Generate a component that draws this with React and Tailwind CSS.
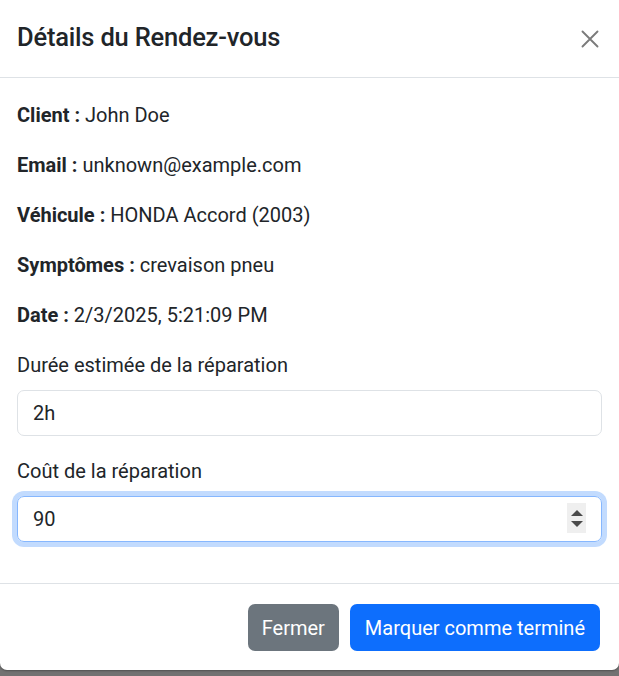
import React from 'react';

const rows = [
  ['Client', 'John Doe'],
  ['Email', 'unknown@example.com'],
  ['Véhicule', 'HONDA Accord (2003)'],
  ['Symptômes', 'crevaison pneu'],
  ['Date', '2/3/2025, 5:21:09 PM'],
];

const CloseIcon = () => (
  <svg className="w-5 h-5" viewBox="0 0 16 16" fill="none" stroke="currentColor" strokeWidth={1.5} strokeLinecap="round">
    <path d="M2 2l12 12M14 2L2 14" />
  </svg>
);

const App = () => {
  return (
    <div className="min-h-[676px] bg-[#727272] font-['Roboto',sans-serif] text-[#212529]">
      <div className="w-[619px] bg-white rounded-b-[7px] shadow-[0_1px_2px_rgba(0,0,0,0.3)]">
        {/* Header */}
        <div className="h-[78px] px-[17px] flex items-center justify-between border-b border-[#dee2e6]">
          <h5 className="text-[25.5px] font-medium leading-none -mt-[2px] tracking-[-0.2px]">Détails du Rendez-vous</h5>
          <button className="mr-[2px] text-[#7b7b7b]" aria-label="Close">
            <CloseIcon />
          </button>
        </div>

        {/* Body */}
        <div className="p-[17px] pt-[22px] pb-[21px] text-[20px] leading-[30px]">
          {rows.map(([label, value]) => (
            <p key={label} className="mb-[20px]">
              <strong className="font-bold">{label} :</strong> {value}
            </p>
          ))}

          <div className="mb-[20px]">
            <label className="block mb-[10px]">Durée estimée de la réparation</label>
            <input
              readOnly
              value="2h"
              className="w-full h-[46px] px-[15px] border border-[#dee2e6] rounded-[7px] outline-none text-[20px]"
            />
          </div>

          <div className="mb-[20px]">
            <label className="block mb-[10px]">Coût de la réparation</label>
            <div className="relative">
              <input
                readOnly
                value="90"
                className="w-full h-[46px] px-[15px] border border-[#86b7fe] rounded-[7px] outline-none text-[20px] shadow-[0_0_0_5px_rgba(13,110,253,0.25)]"
              />
              <div className="absolute right-[16px] top-[7px] w-[19px] h-[30px] bg-[#efefef] flex flex-col items-center justify-center gap-[5px]">
                <span className="w-0 h-0 border-l-[6px] border-r-[6px] border-b-[6px] border-l-transparent border-r-transparent border-b-[#4a4a4a]" />
                <span className="w-0 h-0 border-l-[6px] border-r-[6px] border-t-[6px] border-l-transparent border-r-transparent border-t-[#4a4a4a]" />
              </div>
            </div>
          </div>
        </div>

        {/* Footer */}
        <div className="border-t border-[#dee2e6] px-[19px] pt-[20px] pb-[19px] flex justify-end gap-[11px] text-[20px]">
          <button className="h-[47px] px-[14px] rounded-[7px] bg-[#6c757d] text-white">Fermer</button>
          <button className="h-[47px] px-[15px] rounded-[7px] bg-[#0d6efd] text-white">Marquer comme terminé</button>
        </div>
      </div>
    </div>
  );
};

export default App;
